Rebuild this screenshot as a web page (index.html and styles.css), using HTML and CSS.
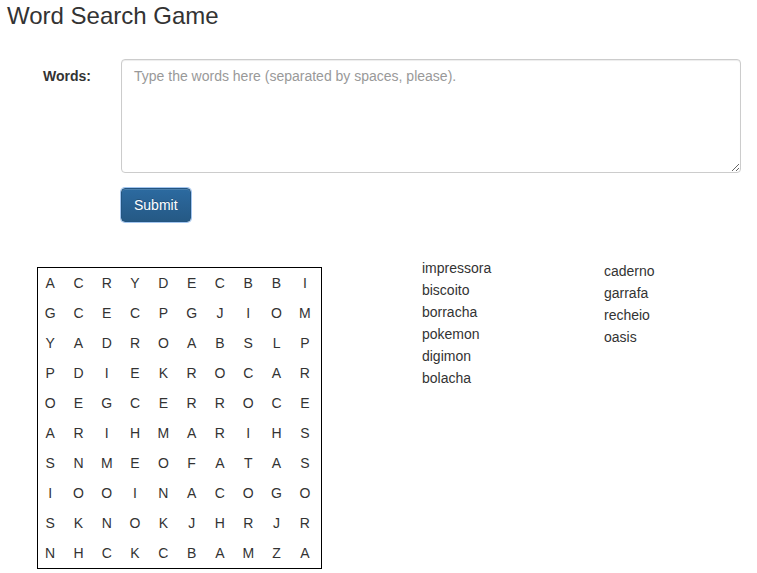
FILE: index.html
```html
<!DOCTYPE html>
<html lang="en">
<head>
<meta charset="utf-8">
<title>Word Search Game</title>
<link rel="stylesheet" href="styles.css">
</head>
<body>
<h3 class="title">Word Search Game</h3>
<form class="form">
  <div class="form-row">
    <label class="label" for="words">Words:</label>
    <div class="control">
      <textarea id="words" class="textarea" rows="5" placeholder="Type the words here (separated by spaces, please)."></textarea>
    </div>
  </div>
  <div class="form-row btn-row">
    <div class="label-spacer"></div>
    <div class="control">
      <button type="button" class="btn">Submit</button>
    </div>
  </div>
</form>
<div class="game">
  <div class="board">
    <span>A</span><span>C</span><span>R</span><span>Y</span><span>D</span><span>E</span><span>C</span><span>B</span><span>B</span><span>I</span>
    <span>G</span><span>C</span><span>E</span><span>C</span><span>P</span><span>G</span><span>J</span><span>I</span><span>O</span><span>M</span>
    <span>Y</span><span>A</span><span>D</span><span>R</span><span>O</span><span>A</span><span>B</span><span>S</span><span>L</span><span>P</span>
    <span>P</span><span>D</span><span>I</span><span>E</span><span>K</span><span>R</span><span>O</span><span>C</span><span>A</span><span>R</span>
    <span>O</span><span>E</span><span>G</span><span>C</span><span>E</span><span>R</span><span>R</span><span>O</span><span>C</span><span>E</span>
    <span>A</span><span>R</span><span>I</span><span>H</span><span>M</span><span>A</span><span>R</span><span>I</span><span>H</span><span>S</span>
    <span>S</span><span>N</span><span>M</span><span>E</span><span>O</span><span>F</span><span>A</span><span>T</span><span>A</span><span>S</span>
    <span>I</span><span>O</span><span>O</span><span>I</span><span>N</span><span>A</span><span>C</span><span>O</span><span>G</span><span>O</span>
    <span>S</span><span>K</span><span>N</span><span>O</span><span>K</span><span>J</span><span>H</span><span>R</span><span>J</span><span>R</span>
    <span>N</span><span>H</span><span>C</span><span>K</span><span>C</span><span>B</span><span>A</span><span>M</span><span>Z</span><span>A</span>
  </div>
  <ul class="words words-1">
    <li>impressora</li>
    <li>biscoito</li>
    <li>borracha</li>
    <li>pokemon</li>
    <li>digimon</li>
    <li>bolacha</li>
  </ul>
  <ul class="words words-2">
    <li>caderno</li>
    <li>garrafa</li>
    <li>recheio</li>
    <li>oasis</li>
  </ul>
</div>
</body>
</html>
```
FILE: styles.css
```css
html, body {
  margin: 0;
  padding: 0;
  background: #fff;
}
body {
  font-family: "Liberation Sans", Arial, Helvetica, sans-serif;
  font-size: 14px;
  line-height: 20px;
  color: #333;
}
.title {
  margin: 3px 0 0 7px;
  font-size: 24px;
  font-weight: 500;
  line-height: 26.4px;
  color: #333;
}
.form {
  margin-top: 30px;
}
.form-row {
  display: flex;
}
.label {
  width: 91px;
  padding-right: 15px;
  padding-top: 7px;
  text-align: right;
  font-weight: bold;
  box-sizing: content-box;
}
.label-spacer {
  width: 106px;
}
.control {
  padding-left: 15px;
}
.textarea {
  display: block;
  box-sizing: border-box;
  width: 620px;
  height: 114px;
  margin: 0;
  padding: 6px 12px;
  border: 1px solid #ccc;
  border-radius: 4px;
  box-shadow: inset 0 1px 1px rgba(0, 0, 0, .075);
  font-family: "Liberation Sans", Arial, Helvetica, sans-serif;
  font-size: 14px;
  line-height: 20px;
  color: #555;
  background: #fff;
}
.textarea::placeholder {
  color: #999;
}
.btn-row {
  margin-top: 15px;
}
.btn {
  display: block;
  box-sizing: border-box;
  height: 34px;
  padding: 6px 12px;
  font-family: "Liberation Sans", Arial, Helvetica, sans-serif;
  font-size: 14px;
  line-height: 20px;
  color: #fff;
  text-shadow: 0 -1px 0 rgba(0, 0, 0, .2);
  border: 1px solid #245580;
  border-radius: 4px;
  background: linear-gradient(to bottom, #2c6aa0 0, #255985 100%);
  box-shadow: 0 0 0 1px rgba(102, 160, 230, .6), inset 0 1px 0 rgba(255, 255, 255, .15);
  cursor: pointer;
}
.game {
  display: flex;
  align-items: flex-start;
  margin: 45px 0 0 37px;
}
.board {
  display: grid;
  grid-template-columns: repeat(10, 28.3px);
  grid-auto-rows: 30px;
  border: 1px solid #000;
}
.board span {
  display: flex;
  align-items: center;
  justify-content: center;
  padding-right: 4px;
  line-height: 20px;
  font-size: 14px;
  color: #333;
}
.words {
  list-style: none;
  margin: 0;
  padding: 0;
}
.words li {
  line-height: 22px;
  height: 22px;
}
.words-1 {
  width: 182px;
  margin-left: 100px;
  margin-top: -10px;
}
.words-2 {
  margin-top: -7px;
}
```
